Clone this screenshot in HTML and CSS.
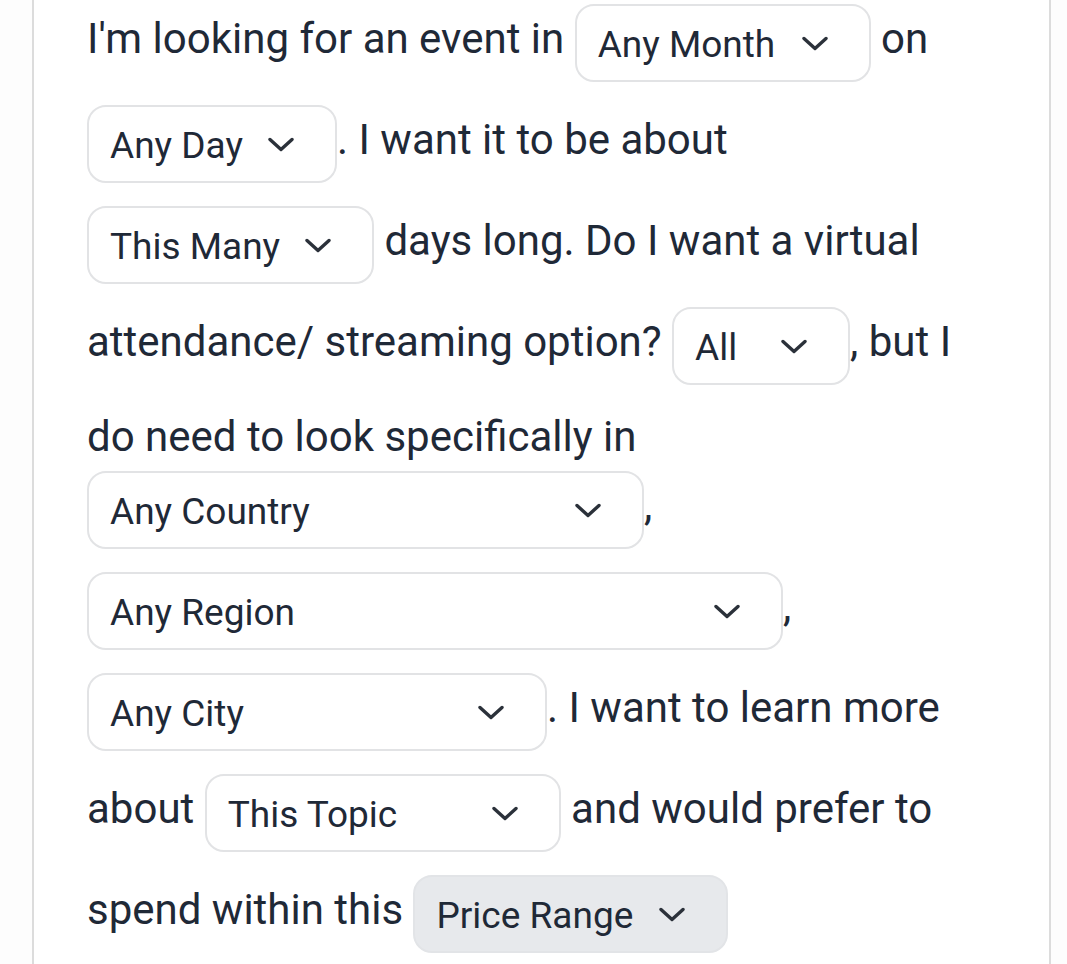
FILE: index.html
```html
<!DOCTYPE html>
<html lang="en">
<head>
<meta charset="utf-8">
<title>Event finder</title>
<link rel="stylesheet" href="styles.css">
</head>
<body>
<div class="card">
<p class="sentence">I'm looking for an event in <span class="dd w-month"><span class="dd-label">Any Month</span><svg class="chev" viewBox="0 0 26 15" width="26" height="15"><polyline points="2,2.5 13,12.5 24,2.5"/></svg></span> on <span class="dd w-day"><span class="dd-label">Any Day</span><svg class="chev" viewBox="0 0 26 15" width="26" height="15"><polyline points="2,2.5 13,12.5 24,2.5"/></svg></span>. I want it to be about <span class="dd w-many"><span class="dd-label">This Many</span><svg class="chev" viewBox="0 0 26 15" width="26" height="15"><polyline points="2,2.5 13,12.5 24,2.5"/></svg></span> days long. Do I want a virtual attendance/ streaming option? <span class="dd w-all"><span class="dd-label">All</span><svg class="chev" viewBox="0 0 26 15" width="26" height="15"><polyline points="2,2.5 13,12.5 24,2.5"/></svg></span>, but I do need to look specifically in <span class="dd w-country"><span class="dd-label">Any Country</span><svg class="chev" viewBox="0 0 26 15" width="26" height="15"><polyline points="2,2.5 13,12.5 24,2.5"/></svg></span>, <span class="dd w-region"><span class="dd-label">Any Region</span><svg class="chev" viewBox="0 0 26 15" width="26" height="15"><polyline points="2,2.5 13,12.5 24,2.5"/></svg></span>, <span class="dd w-city"><span class="dd-label">Any City</span><svg class="chev" viewBox="0 0 26 15" width="26" height="15"><polyline points="2,2.5 13,12.5 24,2.5"/></svg></span>. I want to learn more about <span class="dd w-topic"><span class="dd-label">This Topic</span><svg class="chev" viewBox="0 0 26 15" width="26" height="15"><polyline points="2,2.5 13,12.5 24,2.5"/></svg></span> and would prefer to spend within this <span class="dd dd-active w-price"><span class="dd-label">Price Range</span><svg class="chev" viewBox="0 0 26 15" width="26" height="15"><polyline points="2,2.5 13,12.5 24,2.5"/></svg></span></p>
</div>
</body>
</html>
```

FILE: styles.css
```css
html, body {
  margin: 0;
  padding: 0;
  background: #fdfdfd;
}

body {
  font-family: Roboto, "Noto Sans", Arial, sans-serif;
  color: #1f2937;
  overflow: hidden;
}

.card {
  margin: 0 16px 0 32px;
  padding: 1px 53px 0 53px;
  border-left: 2px solid #dcdcdc;
  border-right: 2px solid #dcdcdc;
  background: #ffffff;
  min-height: 100vh;
}

.sentence {
  margin: 0;
  font-size: 42px;
  line-height: 63px;
}

.dd {
  display: inline-flex;
  align-items: center;
  justify-content: space-between;
  box-sizing: border-box;
  height: 78px;
  margin: 3px 0 20px 0;
  padding: 3px 41px 0 21px;
  vertical-align: -3.3px;
  border: 2px solid #e2e3e5;
  border-radius: 19px;
  background: #ffffff;
  font-size: 37px;
  line-height: 46px;
  white-space: nowrap;
}

.dd-active {
  background: #e7e9ec;
  border-color: #e2e4e7;
}

.chev {
  flex: none;
  margin-top: -3px;
  fill: none;
  stroke: #2b313a;
  stroke-width: 3.4;
  stroke-linecap: round;
  stroke-linejoin: round;
}

.w-month { width: 296px; }
.w-day { width: 250px; }
.w-many { width: 287px; }
.w-all { width: 178px; }
.w-country { width: 557px; }
.w-region { width: 696px; }
.w-city { width: 460px; }
.w-topic { width: 356px; }
.w-price { width: 315px; }
```
